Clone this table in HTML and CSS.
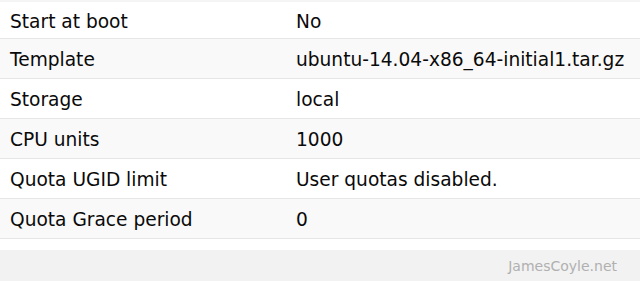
FILE: index.html
```html
<!DOCTYPE html>
<html lang="en">
<head>
    <meta charset="UTF-8">
    <title>Container options</title>
    <link rel="stylesheet" href="styles.css">
</head>
<body>
    <div class="panel">
        <div class="stub"></div>
        <div class="fila first">
            <div class="clave">Start at boot</div>
            <div class="valor">No</div>
        </div>
        <div class="fila alt">
            <div class="clave">Template</div>
            <div class="valor">ubuntu-14.04-x86_64-initial1.tar.gz</div>
        </div>
        <div class="fila">
            <div class="clave">Storage</div>
            <div class="valor">local</div>
        </div>
        <div class="fila alt">
            <div class="clave">CPU units</div>
            <div class="valor">1000</div>
        </div>
        <div class="fila">
            <div class="clave">Quota UGID limit</div>
            <div class="valor">User quotas disabled.</div>
        </div>
        <div class="fila alt">
            <div class="clave">Quota Grace period</div>
            <div class="valor">0</div>
        </div>
    </div>
    <div class="pie">
        <span class="marca">JamesCoyle.net</span>
    </div>
</body>
</html>
```

FILE: styles.css
```css
html, body {
    margin: 0;
    padding: 0;
}
body {
    width: 640px;
    height: 281px;
    background: #fff;
    font-family: 'DejaVu Sans', Verdana, sans-serif;
    overflow: hidden;
}
.panel {
    display: flex;
    flex-direction: column;
}
.stub {
    height: 2px;
    background: #f5f5f5;
}
.fila {
    display: flex;
    align-items: center;
    height: 39px;
    border-bottom: 1px solid #e6e6e6;
    font-size: 18.6px;
    color: #0a0a0a;
}
.fila.first {
    height: 36px;
}
.fila.alt {
    background: #f9f9f9;
}
.clave {
    width: 286px;
    padding-left: 10px;
    padding-top: 2px;
}
.valor {
    flex: 1;
    padding-top: 2px;
}
.pie {
    margin-top: 11px;
    height: 31px;
    background: #f2f2f2;
    display: flex;
    align-items: center;
    justify-content: flex-end;
    padding-right: 23px;
}
.marca {
    font-size: 14px;
    color: #b0b0b0;
}
```
